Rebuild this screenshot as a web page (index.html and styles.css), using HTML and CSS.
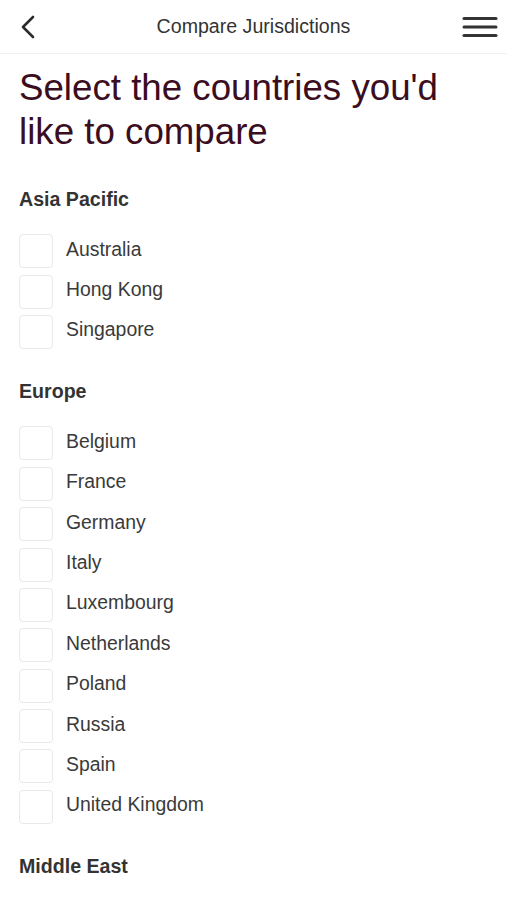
FILE: index.html
```html
<!DOCTYPE html>
<html lang="en">
<head>
<meta charset="utf-8">
<title>Compare Jurisdictions</title>
<link rel="stylesheet" href="styles.css">
</head>
<body>
<header class="topbar">
  <button class="icon-btn back" aria-label="Back">
    <svg width="16" height="24" viewBox="0 0 16 24"><path d="M13 2 L3 12 L13 22" fill="none" stroke="#2b2b2b" stroke-width="2.6" stroke-linecap="round" stroke-linejoin="round"/></svg>
  </button>
  <div class="title">Compare Jurisdictions</div>
  <button class="icon-btn menu" aria-label="Menu">
    <svg width="36" height="24" viewBox="0 0 36 24"><g stroke="#333" stroke-width="3" stroke-linecap="round"><line x1="2" y1="3.5" x2="34" y2="3.5"/><line x1="2" y1="12" x2="34" y2="12"/><line x1="2" y1="20.5" x2="34" y2="20.5"/></g></svg>
  </button>
</header>
<main class="content">
  <h1 class="heading">Select the countries you'd like to compare</h1>

  <section class="group">
    <h2 class="group-title">Asia Pacific</h2>
    <label class="row"><span class="box"></span><span class="label">Australia</span></label>
    <label class="row"><span class="box"></span><span class="label">Hong Kong</span></label>
    <label class="row"><span class="box"></span><span class="label">Singapore</span></label>
  </section>

  <section class="group">
    <h2 class="group-title">Europe</h2>
    <label class="row"><span class="box"></span><span class="label">Belgium</span></label>
    <label class="row"><span class="box"></span><span class="label">France</span></label>
    <label class="row"><span class="box"></span><span class="label">Germany</span></label>
    <label class="row"><span class="box"></span><span class="label">Italy</span></label>
    <label class="row"><span class="box"></span><span class="label">Luxembourg</span></label>
    <label class="row"><span class="box"></span><span class="label">Netherlands</span></label>
    <label class="row"><span class="box"></span><span class="label">Poland</span></label>
    <label class="row"><span class="box"></span><span class="label">Russia</span></label>
    <label class="row"><span class="box"></span><span class="label">Spain</span></label>
    <label class="row"><span class="box"></span><span class="label">United Kingdom</span></label>
  </section>

  <section class="group">
    <h2 class="group-title">Middle East</h2>
  </section>
</main>
</body>
</html>
```
FILE: styles.css
```css
html, body {
  margin: 0;
  padding: 0;
  background: #fff;
  font-family: "Liberation Sans", Arial, sans-serif;
  color: #333;
}
.topbar {
  height: 53px;
  border-bottom: 1px solid #f1f1f1;
  display: flex;
  align-items: center;
  justify-content: space-between;
  padding: 0 9px 0 20px;
}
.icon-btn {
  background: none;
  border: 0;
  padding: 0;
  display: flex;
  align-items: center;
}
.back svg { display: block; }
.menu svg { display: block; }
.title {
  font-size: 19.6px;
  color: #333;
  margin-left: 9px;
}
.content {
  padding: 12px 19px 0 19px;
}
.heading {
  margin: 0;
  font-weight: normal;
  font-size: 36.7px;
  line-height: 44px;
  color: #3b0d20;
}
.group {
  margin-top: 29px;
}
.heading + .group {
  margin-top: 33px;
}
.group-title {
  margin: 0 0 18px 0;
  font-size: 19.6px;
  line-height: 24px;
  font-weight: bold;
  color: #333;
}
.row {
  display: flex;
  align-items: center;
  height: 40.4px;
}
.box {
  width: 32px;
  height: 32px;
  border: 1px solid #e9e9e9;
  border-radius: 4px;
  flex: none;
  margin-top: 4px;
}
.label {
  margin-left: 13px;
  font-size: 19.4px;
  color: #3a3a3a;
}
```
